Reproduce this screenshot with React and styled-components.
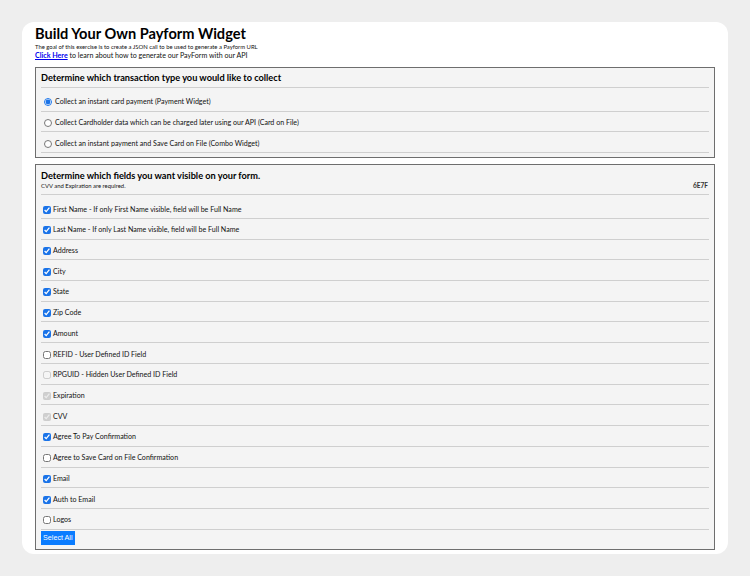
import React, { useState } from 'react';
import styled, { createGlobalStyle } from 'styled-components';

const TRANSACTION_TYPES = [
  'Collect an instant card payment (Payment Widget)',
  'Collect Cardholder data which can be charged later using our API (Card on File)',
  'Collect an instant payment and Save Card on File (Combo Widget)',
];

// checked / disabled state for each field
const FIELDS = [
  { label: 'First Name - If only First Name visible, field will be Full Name', checked: true },
  { label: 'Last Name - If only Last Name visible, field will be Full Name', checked: true },
  { label: 'Address', checked: true },
  { label: 'City', checked: true },
  { label: 'State', checked: true },
  { label: 'Zip Code', checked: true },
  { label: 'Amount', checked: true },
  { label: 'REFID - User Defined ID Field', checked: false },
  { label: 'RPGUID - Hidden User Defined ID Field', checked: false, disabled: true },
  { label: 'Expiration', checked: true, disabled: true },
  { label: 'CVV', checked: true, disabled: true },
  { label: 'Agree To Pay Confirmation', checked: true },
  { label: 'Agree to Save Card on File Confirmation', checked: false },
  { label: 'Email', checked: true },
  { label: 'Auth to Email', checked: true },
  { label: 'Logos', checked: false },
];

const GlobalStyle = createGlobalStyle`
  html, body {
    margin: 0;
    padding: 0;
    background: #eeeeee;
    font-family: Lato, 'Open Sans', sans-serif;
    color: #111;
  }
`;

const App = () => {
  const [type, setType] = useState(0);
  const [fields, setFields] = useState(FIELDS.map(f => f.checked));

  const toggle = (i) => {
    setFields(prev => prev.map((v, j) => (j === i ? !v : v)));
  };

  const selectAll = () => {
    setFields(prev => prev.map((v, i) => (FIELDS[i].disabled ? v : true)));
  };

  return (
    <Page>
      <GlobalStyle />
      <Card>
        <Title>Build Your Own Payform Widget</Title>
        <Intro>The goal of this exercise is to create a JSON call to be used to generate a Payform URL</Intro>
        <LinkLine>
          <a href="#api">Click Here</a> to learn about how to generate our PayForm with our API
        </LinkLine>

        <Section>
          <SectionHeader>
            <SectionTitle>Determine which transaction type you would like to collect</SectionTitle>
          </SectionHeader>
          <List>
            {TRANSACTION_TYPES.map((label, i) => (
              <Row key={i}>
                <Radio
                  type="radio"
                  name="txType"
                  checked={type === i}
                  onChange={() => setType(i)}
                />
                <RowLabel>{label}</RowLabel>
              </Row>
            ))}
          </List>
        </Section>

        <Section>
          <SectionHeader $tall>
            <SectionTitle>Determine which fields you want visible on your form.</SectionTitle>
            <SubLine>
              <Note>CVV and Expiration are required.</Note>
              <Code>6E7F</Code>
            </SubLine>
          </SectionHeader>
          <List>
            {FIELDS.map((f, i) => (
              <Row key={i}>
                <Check
                  type="checkbox"
                  checked={fields[i]}
                  disabled={f.disabled}
                  onChange={() => toggle(i)}
                />
                <RowLabel>{f.label}</RowLabel>
              </Row>
            ))}
          </List>
          <Button onClick={selectAll}>Select All</Button>
        </Section>
      </Card>
    </Page>
  );
};

export default App;

const Page = styled.div`
  padding: 22px;
  min-height: 576px;
  box-sizing: border-box;
`;

const Card = styled.div`
  background: #fff;
  border-radius: 12px;
  padding: 3px 13px 4px 13px;
  display: flex;
  flex-direction: column;
`;

const Title = styled.h1`
  margin: 0;
  font-size: 14.6px;
  line-height: 18px;
  font-weight: 700;
  color: #000;
`;

const Intro = styled.p`
  margin: 0;
  font-size: 5.9px;
  line-height: 8px;
`;

const LinkLine = styled.p`
  margin: 0;
  font-size: 7.1px;
  line-height: 10px;

  a {
    color: #0000ee;
    font-weight: 700;
    text-decoration: underline;
  }
`;

const Section = styled.section`
  margin-top: 6px;
  border: 1px solid #6e6e6e;
  background: #f4f4f4;
  padding: 0 5px 4px;
`;

const SectionHeader = styled.div`
  border-bottom: 1px solid #cfcfcf;
  padding: ${p => (p.$tall ? '5px 0 5px' : '4px 0 4px')};
`;

const SectionTitle = styled.h2`
  margin: 0;
  font-size: 9.2px;
  line-height: 11px;
  font-weight: 700;
  color: #000;
`;

const SubLine = styled.div`
  display: flex;
  justify-content: space-between;
  align-items: baseline;
  margin-top: 2px;
  line-height: 6px;
`;

const Note = styled.span`
  font-size: 5.9px;
`;

const Code = styled.span`
  font-size: 6.5px;
  font-weight: 700;
  color: #333;
  padding-right: 1px;
`;

const List = styled.div`
  padding-top: 3px;
  display: flex;
  flex-direction: column;
`;

const Row = styled.label`
  display: flex;
  align-items: center;
  box-sizing: border-box;
  height: 20.73px;
  padding-top: 3px;
  border-bottom: 1px solid #cfcfcf;
  cursor: pointer;
`;

const RowLabel = styled.span`
  font-size: 7.1px;
  line-height: 10px;
  color: #111;
`;

const Check = styled.input`
  width: 8px;
  height: 8px;
  margin: 0 2px 0 2px;
  accent-color: #1a73e8;
`;

const Radio = styled.input`
  width: 8px;
  height: 8px;
  margin: 0 3px 0 3px;
  accent-color: #1a73e8;
`;

const Button = styled.button`
  display: block;
  margin-top: 1px;
  height: 14px;
  padding: 0 2px;
  border: none;
  border-radius: 0;
  background: #0a7cff;
  color: #fff;
  font-family: 'Liberation Sans', Arial, sans-serif;
  font-size: 7.2px;
  cursor: pointer;
`;
